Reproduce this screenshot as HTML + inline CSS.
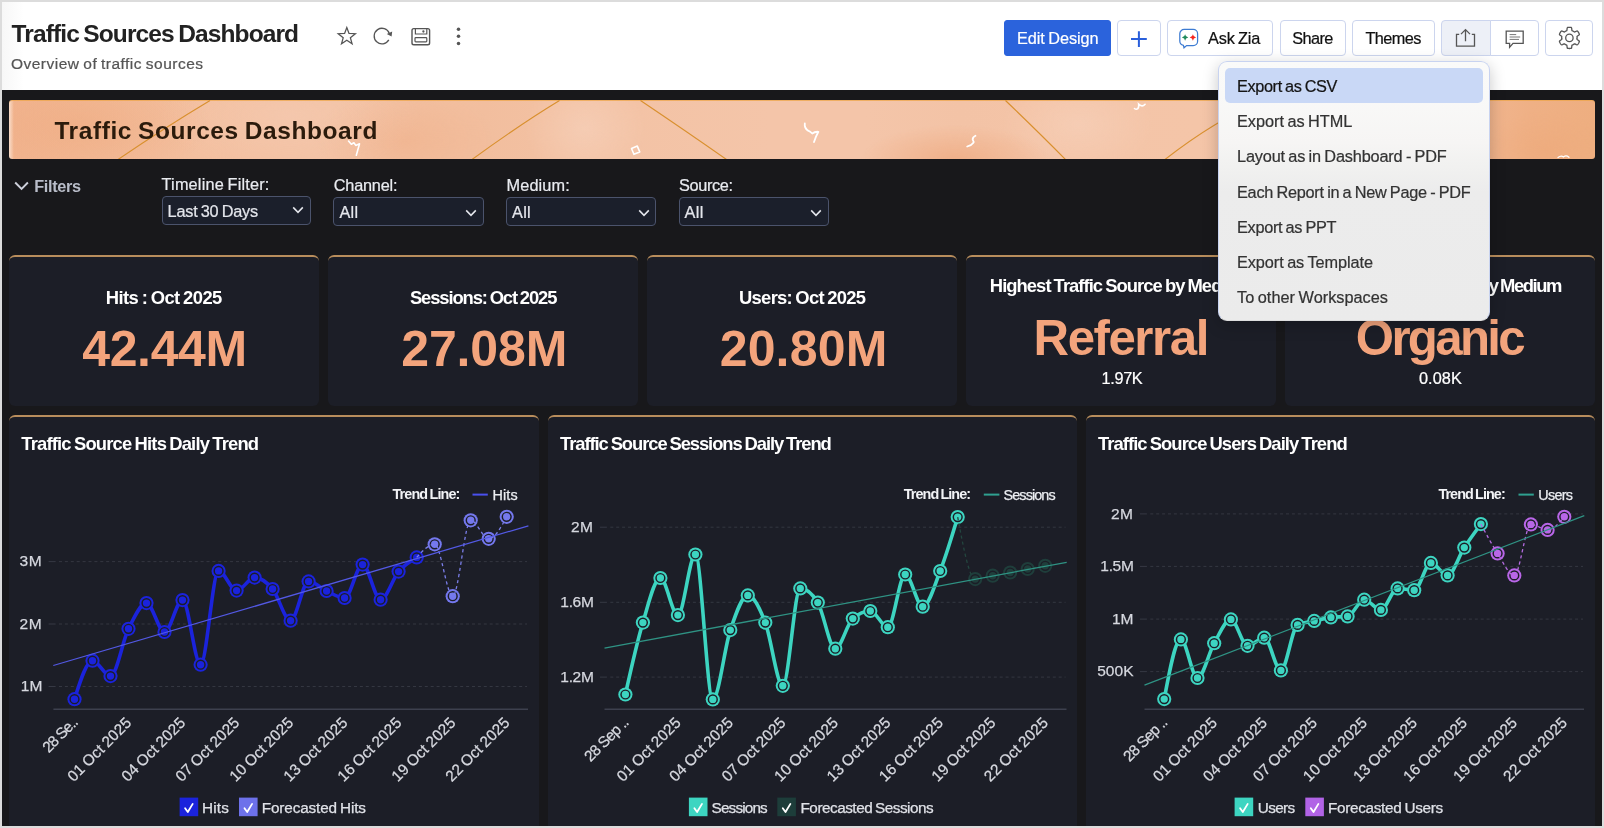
<!DOCTYPE html>
<html lang="en"><head><meta charset="utf-8"><title>Traffic Sources Dashboard</title>
<style>
html,body{margin:0;padding:0}
body{width:1604px;height:828px;overflow:hidden;background:#dcdcdc;font-family:'Liberation Sans',sans-serif;position:relative}
.abs,#stage *{position:absolute}
#stage span,#stage h1,#stage h2,#stage h3,#stage p,#stage li,#stage label{white-space:pre;margin:0;padding:0;font-weight:400;display:block}
#app{position:absolute;left:2px;top:2px;width:1600px;height:824px;overflow:hidden;background:#18181b}
#stage{position:absolute;left:-2px;top:-2px;width:1604px;height:828px;will-change:transform}
#hdr{left:2px;top:2px;width:1600px;height:88px;background:linear-gradient(90deg,#f7f7f7 0,#fff 22px)}
.btn{top:19.8px;height:36px;box-sizing:border-box;border:1px solid #ccd5ee;border-radius:4px;background:#fff}
.btn.primary{background:#2b63dc;border-color:#2b63dc;border-radius:3px}
.btn.on{background:#edf0f7}
#menu{left:1218.3px;top:61.2px;width:272px;height:259.8px;box-sizing:border-box;border-radius:9px;border:1px solid #c8d3f0;border-bottom-color:#dedede;
 background:linear-gradient(180deg,#fafaf9 0px,#f9f9f8 34px,#f6f5f4 80px,#f1f1f0 104px,#ececec 130px,#ebebeb 100%);box-shadow:0 4px 16px rgba(0,0,0,.22);list-style:none;margin:0;padding:0}
#menu .hl{left:5.7px;top:5.5px;width:258.4px;height:35.2px;background:#c9d8f6;border-radius:5px}
#banner{left:9px;top:99.5px;width:1586px;height:59.3px;border-radius:3px;overflow:hidden;box-shadow:inset 0 1px 0 rgba(238,165,75,.75);background:linear-gradient(90deg,rgba(250,225,208,.9) 0px,rgba(250,225,208,0) 5px),radial-gradient(95px 36px at 946px 60.5px,rgba(238,167,124,0.7) 0%,rgba(238,167,124,0) 100%),radial-gradient(90px 55px at 396px 40.5px,rgba(238,167,124,0.38) 0%,rgba(238,167,124,0) 100%),radial-gradient(130px 60px at 71px 25.5px,rgba(238,167,124,0.45) 0%,rgba(238,167,124,0) 100%),radial-gradient(60px 55px at 576px 28.5px,rgba(246,207,184,0.75) 0%,rgba(246,207,184,0) 100%),radial-gradient(75px 50px at 1069px 24.5px,rgba(246,207,184,0.75) 0%,rgba(246,207,184,0) 100%),radial-gradient(130px 60px at 281px 15.5px,rgba(245,203,179,0.6) 0%,rgba(245,203,179,0) 100%),radial-gradient(60px 40px at 1536px 50.5px,rgba(237,168,120,0.5) 0%,rgba(237,168,120,0) 100%),linear-gradient(90deg,#f1b48f 0%,#f2b995 5%,#f3bf9f 12%,#f3c2a4 22%,#f2be9e 30%,#f3c2a4 36%,#f4c5a9 48%,#f4c5a9 54%,#f3c3a6 60%,#f4c4a7 65%,#f4c5a8 75%,#f3c0a1 84%,#f1b690 92%,#efb085 96%,#eeae80 100%)}
.sel{box-sizing:border-box;border:1px solid #4b536c;border-radius:4px;background:#1b1f2b}
.card{background:#1c1e27;border-top:2px solid rgba(219,166,104,.82);border-radius:6px;box-sizing:border-box}
svg{overflow:visible}
svg text{font-family:'Liberation Sans',sans-serif}
</style></head>
<body>
<div id="app"><div id="stage">
<header id="hdr"></header>
<h1 style="left:11.60px;top:21.66px;font-size:24.5px;line-height:24.5px;color:#222;font-weight:700;letter-spacing:-0.890px;word-spacing:-1.47px;">Traffic Sources Dashboard</h1>
<p style="left:11.00px;top:56.48px;font-size:15.5px;line-height:15.5px;color:#555;-webkit-text-stroke:.22px;letter-spacing:0.479px;word-spacing:-0.93px;">Overview of traffic sources</p>
<div class="btn primary" style="left:1003.5px;width:107.5px"><span style="left:12.60px;top:9.60px;font-size:16.3px;line-height:16.3px;color:#fff;letter-spacing:-0.088px;word-spacing:-0.98px;-webkit-text-stroke:.2px #fff;">Edit Design</span></div>
<div class="btn" style="left:1117px;width:43.5px"></div>
<div class="btn" style="left:1167px;width:106.3px"><span style="left:40.00px;top:9.50px;font-size:16.3px;line-height:16.3px;color:#111;-webkit-text-stroke:.22px;letter-spacing:-0.169px;word-spacing:-0.98px;">Ask Zia</span></div>
<div class="btn" style="left:1279.5px;width:66.3px"><span style="left:11.70px;top:9.50px;font-size:16.3px;line-height:16.3px;color:#111;-webkit-text-stroke:.22px;letter-spacing:-0.588px;">Share</span></div>
<div class="btn" style="left:1352.2px;width:82.6px"><span style="left:12.30px;top:9.50px;font-size:16.3px;line-height:16.3px;color:#111;-webkit-text-stroke:.22px;letter-spacing:-0.606px;">Themes</span></div>
<div class="btn on" style="left:1441px;width:49.5px;border-radius:4px 0 0 4px"></div>
<div class="btn" style="left:1489.5px;width:49.7px;border-radius:0 4px 4px 0"></div>
<div class="btn" style="left:1545.3px;width:48.2px"></div>
<svg class="abs" style="left:0;top:0" width="1604" height="90" viewBox="0 0 1604 90" fill="none">
<path d="M346.80,27.50 L349.00,33.47 L355.36,33.72 L350.37,37.66 L352.09,43.78 L346.80,40.25 L341.51,43.78 L343.23,37.66 L338.24,33.72 L344.60,33.47Z" stroke="#555" stroke-width="1.25" stroke-linejoin="miter"/>
<path d="M389.3,33.4 A7.8,7.8 0 1 0 388.8,39.9" stroke="#555" stroke-width="1.3"/>
<path d="M392.2,31.4 L391.6,36.6 L386.8,34.0 Z" fill="#555"/>
<rect x="412" y="28.6" width="17.6" height="16.2" rx="1.8" stroke="#555" stroke-width="1.4"/>
<path d="M415.4,28.8 v5.2 h11.4 v-5.2" stroke="#555" stroke-width="1.2"/>
<circle cx="423.4" cy="31.5" r="1.15" fill="#555"/>
<rect x="415" y="37.6" width="11.8" height="4.2" rx="0.8" stroke="#555" stroke-width="1.2"/>
<circle cx="458.5" cy="29.2" r="1.75" fill="#555"/><circle cx="458.5" cy="36.3" r="1.75" fill="#555"/><circle cx="458.5" cy="43.4" r="1.75" fill="#555"/>
<!-- plus -->
<path d="M1131,39.1 h15.8 M1138.9,31.2 v15.8" stroke="#2a5fdb" stroke-width="2"/>
<!-- zia -->
<path d="M1184.2,29.4 h9 a4.4,4.4 0 0 1 4.4,4.4 v7.4 a4.4,4.4 0 0 1 -4.4,4.4 h-6.6 l-2.6,2.2 l-0.6,-2.4 a4.4,4.4 0 0 1 -3.6,-4.3 v-7.3 a4.4,4.4 0 0 1 4.4,-4.4 Z" stroke="#3d7bd2" stroke-width="1.25" fill="#fff"/>
<path d="M1185.1,34.3 Q1185.4584,37.1416 1188.3,37.5 Q1185.4584,37.8584 1185.1,40.7 Q1184.7415999999998,37.8584 1181.8999999999999,37.5 Q1184.7415999999998,37.1416 1185.1,34.3Z" fill="#1f8a5c"/><path d="M1192.9,34.3 Q1193.2584000000002,37.1416 1196.1000000000001,37.5 Q1193.2584000000002,37.8584 1192.9,40.7 Q1192.5416,37.8584 1189.7,37.5 Q1192.5416,37.1416 1192.9,34.3Z" fill="#f5261f"/>
<!-- export -->
<path d="M1459.2,34.3 h-2.7 v11.9 h18 v-11.9 h-2.7" stroke="#555" stroke-width="1.3"/>
<path d="M1465.5,41.2 v-11.4 M1461,34.1 l4.5,-4.5 l4.5,4.5" stroke="#555" stroke-width="1.3"/>
<!-- comment -->
<path d="M1506.2,31.1 h17 v12.2 h-10.2 l-3.4,4 v-4 h-3.4 Z" stroke="#555" stroke-width="1.3"/>
<path d="M1509.6,34.6 h6.6 M1509.6,37 h10.6 M1509.6,39.4 h9.4" stroke="#777" stroke-width="1"/>
<!-- gear -->
<path d="M1569.40,27.30 L1569.77,27.31 L1570.14,27.33 L1570.51,27.36 L1570.88,27.40 L1571.24,27.47 L1571.54,27.82 L1571.72,28.59 L1571.80,29.53 L1571.87,30.30 L1572.04,30.66 L1572.28,30.76 L1572.53,30.87 L1572.78,30.98 L1573.01,31.10 L1573.25,31.23 L1573.48,31.37 L1573.71,31.52 L1573.93,31.67 L1574.14,31.83 L1574.35,32.00 L1574.75,31.96 L1575.45,31.64 L1576.30,31.23 L1577.06,31.00 L1577.52,31.09 L1577.75,31.37 L1577.98,31.67 L1578.19,31.97 L1578.39,32.28 L1578.58,32.60 L1578.76,32.92 L1578.93,33.25 L1579.08,33.59 L1579.23,33.93 L1579.36,34.28 L1579.20,34.72 L1578.62,35.26 L1577.85,35.79 L1577.22,36.24 L1576.99,36.56 L1577.03,36.83 L1577.06,37.10 L1577.08,37.36 L1577.10,37.63 L1577.10,37.90 L1577.10,38.17 L1577.08,38.44 L1577.06,38.70 L1577.03,38.97 L1576.99,39.24 L1577.22,39.56 L1577.85,40.01 L1578.62,40.54 L1579.20,41.08 L1579.36,41.52 L1579.23,41.87 L1579.08,42.21 L1578.93,42.55 L1578.76,42.88 L1578.58,43.20 L1578.39,43.52 L1578.19,43.83 L1577.98,44.13 L1577.75,44.43 L1577.52,44.71 L1577.06,44.80 L1576.30,44.57 L1575.45,44.16 L1574.75,43.84 L1574.35,43.80 L1574.14,43.97 L1573.93,44.13 L1573.71,44.28 L1573.48,44.43 L1573.25,44.57 L1573.01,44.70 L1572.78,44.82 L1572.53,44.93 L1572.28,45.04 L1572.04,45.14 L1571.87,45.50 L1571.80,46.27 L1571.72,47.21 L1571.54,47.98 L1571.24,48.33 L1570.88,48.40 L1570.51,48.44 L1570.14,48.47 L1569.77,48.49 L1569.40,48.50 L1569.03,48.49 L1568.66,48.47 L1568.29,48.44 L1567.92,48.40 L1567.56,48.33 L1567.26,47.98 L1567.08,47.21 L1567.00,46.27 L1566.93,45.50 L1566.76,45.14 L1566.52,45.04 L1566.27,44.93 L1566.02,44.82 L1565.79,44.70 L1565.55,44.57 L1565.32,44.43 L1565.09,44.28 L1564.87,44.13 L1564.66,43.97 L1564.45,43.80 L1564.05,43.84 L1563.35,44.16 L1562.50,44.57 L1561.74,44.80 L1561.28,44.71 L1561.05,44.43 L1560.82,44.13 L1560.61,43.83 L1560.41,43.52 L1560.22,43.20 L1560.04,42.88 L1559.87,42.55 L1559.72,42.21 L1559.57,41.87 L1559.44,41.52 L1559.60,41.08 L1560.18,40.54 L1560.95,40.01 L1561.58,39.56 L1561.81,39.24 L1561.77,38.97 L1561.74,38.70 L1561.72,38.44 L1561.70,38.17 L1561.70,37.90 L1561.70,37.63 L1561.72,37.36 L1561.74,37.10 L1561.77,36.83 L1561.81,36.56 L1561.58,36.24 L1560.95,35.79 L1560.18,35.26 L1559.60,34.72 L1559.44,34.28 L1559.57,33.93 L1559.72,33.59 L1559.87,33.25 L1560.04,32.92 L1560.22,32.60 L1560.41,32.28 L1560.61,31.97 L1560.82,31.67 L1561.05,31.37 L1561.28,31.09 L1561.74,31.00 L1562.50,31.23 L1563.35,31.64 L1564.05,31.96 L1564.45,32.00 L1564.66,31.83 L1564.87,31.67 L1565.09,31.52 L1565.32,31.37 L1565.55,31.23 L1565.79,31.10 L1566.02,30.98 L1566.27,30.87 L1566.52,30.76 L1566.76,30.66 L1566.93,30.30 L1567.00,29.53 L1567.08,28.59 L1567.26,27.82 L1567.56,27.47 L1567.92,27.40 L1568.29,27.36 L1568.66,27.33 L1569.03,27.31Z" stroke="#555" stroke-width="1.3" stroke-linejoin="round"/>
<circle cx="1569.4" cy="37.9" r="3.7" stroke="#555" stroke-width="1.3"/>
</svg>
<section id="banner"><svg class="abs" style="left:0;top:0" width="1586" height="59.3" viewBox="0 0 1586 59.3" fill="none">
<defs>
<radialGradient id="rg1" cx="0.5" cy="0.5" r="0.5"><stop offset="0" stop-color="#f8d8c4" stop-opacity=".95"/><stop offset="1" stop-color="#f8d8c4" stop-opacity="0"/></radialGradient>
<radialGradient id="rg2" cx="0.5" cy="0.5" r="0.5"><stop offset="0" stop-color="#efae85" stop-opacity=".95"/><stop offset="1" stop-color="#efae85" stop-opacity="0"/></radialGradient>
</defs>
<path d="M109,59.5 Q156,27.5 201,0.5" stroke="#d9902f" stroke-width="1.15"/>
<path d="M463,59.5 Q511,24.5 550.5,0.5" stroke="#d9902f" stroke-width="1.15"/>
<path d="M631.5,0.5 Q679,32.5 717.5,59.5" stroke="#d9902f" stroke-width="1.15"/>
<path d="M996.5,0.5 Q1031,33.5 1056.5,59.5" stroke="#d9902f" stroke-width="1.15"/>
<path d="M1156,59.5 Q1206,20.5 1253,0.5" stroke="#d9902f" stroke-width="1.15"/>
<path d="M339.5,41.0 l2.8,3.2 l2.6,-1.4 l1.8,2.6 l3.8,-1.6 l-3.2,11.4" stroke="#fff" stroke-width="1.6" stroke-linecap="round" stroke-linejoin="round"/>
<path d="M795.8,23.5 q-0.6,4.6 3.3,7.2 q2.2,0.8 4.1,2.8 q2.6,-2 6.2,-1.7 q-2.6,4.6 -4.4,10.3" stroke="#fff" stroke-width="1.8" stroke-linecap="round" stroke-linejoin="round"/>
<path d="M966.5,35.80000000000001 q-3,1.4 -2.8,3.9 q1.4,2 0.7,3 q-1.6,2.4 -6.2,3.8" stroke="#fff" stroke-width="1.8" stroke-linecap="round"/>
<path d="M1125.5,8.5 q1.6,1.4 3.4,0.2 q1.2,-2.4 0.8,-4.6 q2.2,1.8 3.4,1.8 q1.6,0 3,-1.6" stroke="#fff" stroke-width="1.6" stroke-linecap="round"/>
<path d="M622.5,48.5 l5.8,-2.4 l2.4,5.8 l-5.8,2.4 Z" stroke="#fff" stroke-width="1.6" stroke-linejoin="round"/>
<path d="M1549,57.5 q3,-2.4 5.6,-0.6 q2.6,-2 5.4,0.4" stroke="#fff" stroke-width="1.2" stroke-linecap="round"/>
</svg><h2 style="left:45.40px;top:19.16px;font-size:24.5px;line-height:24.5px;color:#2b1b0c;font-weight:700;letter-spacing:0.589px;word-spacing:-1.47px;">Traffic Sources Dashboard</h2></section>
<svg class="abs" style="left:0;top:170px" width="40" height="30" viewBox="0 170 40 30" fill="none"><path d="M15.2,182.5 l6.35,6.4 l6.35,-6.4" stroke="#cdd0db" stroke-width="1.9"/></svg>
<span style="left:34.20px;top:178.40px;font-size:16.3px;line-height:16.3px;color:#b9bdc9;font-weight:700;letter-spacing:-0.329px;">Filters</span>
<label style="left:161.60px;top:175.90px;font-size:16.3px;line-height:16.3px;color:#e9ebf0;-webkit-text-stroke:.22px;letter-spacing:0.169px;word-spacing:-0.98px;">Timeline Filter:</label><div class="sel" style="left:161.6px;top:196.2px;width:149.2px;height:28.6px"><span style="left:5.00px;top:6.20px;font-size:16.3px;line-height:16.3px;color:#e4e6ec;-webkit-text-stroke:.22px;letter-spacing:-0.234px;word-spacing:-0.98px;">Last 30 Days</span><svg style="left:129.4px;top:8.8px" width="12" height="8" viewBox="0 0 12 8" fill="none"><path d="M1.2,1.4 l4.8,5 l4.8,-5" stroke="#e4e6ec" stroke-width="1.55"/></svg></div>
<label style="left:333.70px;top:176.90px;font-size:16.3px;line-height:16.3px;color:#e9ebf0;-webkit-text-stroke:.22px;letter-spacing:-0.184px;">Channel:</label><div class="sel" style="left:333.4px;top:197px;width:150.6px;height:29.0px"><span style="left:5.00px;top:6.30px;font-size:16.3px;line-height:16.3px;color:#e4e6ec;-webkit-text-stroke:.22px;letter-spacing:0.295px;">All</span><svg style="left:130.6px;top:11.3px" width="12" height="8" viewBox="0 0 12 8" fill="none"><path d="M1.2,1.4 l4.8,5 l4.8,-5" stroke="#e4e6ec" stroke-width="1.55"/></svg></div>
<label style="left:506.50px;top:176.90px;font-size:16.3px;line-height:16.3px;color:#e9ebf0;-webkit-text-stroke:.22px;letter-spacing:0.144px;">Medium:</label><div class="sel" style="left:506px;top:197px;width:150.3px;height:29.0px"><span style="left:5.00px;top:6.30px;font-size:16.3px;line-height:16.3px;color:#e4e6ec;-webkit-text-stroke:.22px;letter-spacing:0.295px;">All</span><svg style="left:130.5px;top:11.3px" width="12" height="8" viewBox="0 0 12 8" fill="none"><path d="M1.2,1.4 l4.8,5 l4.8,-5" stroke="#e4e6ec" stroke-width="1.55"/></svg></div>
<label style="left:679.00px;top:176.90px;font-size:16.3px;line-height:16.3px;color:#e9ebf0;-webkit-text-stroke:.22px;letter-spacing:-0.354px;">Source:</label><div class="sel" style="left:678.6px;top:197px;width:150.4px;height:29.0px"><span style="left:5.00px;top:6.30px;font-size:16.3px;line-height:16.3px;color:#e4e6ec;-webkit-text-stroke:.22px;letter-spacing:0.295px;">All</span><svg style="left:130.4px;top:11.3px" width="12" height="8" viewBox="0 0 12 8" fill="none"><path d="M1.2,1.4 l4.8,5 l4.8,-5" stroke="#e4e6ec" stroke-width="1.55"/></svg></div>
<section class="card" style="left:9px;top:255.2px;width:310px;height:150.5px"><h3 style="left:96.70px;top:31.52px;font-size:18.4px;line-height:18.4px;color:#fff;font-weight:700;letter-spacing:-0.562px;word-spacing:-1.1px;">Hits : Oct 2025</h3><span style="left:73.20px;top:66.47px;font-size:50px;line-height:50px;color:#f3a47c;font-weight:700;letter-spacing:-0.356px;">42.44M</span></section>
<section class="card" style="left:328px;top:255.2px;width:310px;height:150.5px"><h3 style="left:81.95px;top:31.52px;font-size:18.4px;line-height:18.4px;color:#fff;font-weight:700;letter-spacing:-1.116px;word-spacing:-1.1px;">Sessions: Oct 2025</h3><span style="left:73.20px;top:66.47px;font-size:50px;line-height:50px;color:#f3a47c;font-weight:700;letter-spacing:-0.116px;">27.08M</span></section>
<section class="card" style="left:647px;top:255.2px;width:310px;height:150.5px"><h3 style="left:92.00px;top:31.52px;font-size:18.4px;line-height:18.4px;color:#fff;font-weight:700;letter-spacing:-0.703px;word-spacing:-1.1px;">Users: Oct 2025</h3><span style="left:72.65px;top:66.47px;font-size:50px;line-height:50px;color:#f3a47c;font-weight:700;letter-spacing:0.184px;">20.80M</span></section>
<section class="card" style="left:966px;top:255.2px;width:310px;height:150.5px"><h3 style="left:23.80px;top:19.72px;font-size:18.4px;line-height:18.4px;color:#fff;font-weight:700;letter-spacing:-0.953px;word-spacing:-1.1px;">Highest Traffic Source by Medium</h3><span style="left:67.60px;top:55.34px;font-size:49.2px;line-height:49.2px;color:#f3a47c;font-weight:700;letter-spacing:-1.460px;">Referral</span><span style="left:135.60px;top:113.10px;font-size:16.3px;line-height:16.3px;color:#fff;-webkit-text-stroke:.22px;letter-spacing:-0.366px;">1.97K</span></section>
<section class="card" style="left:1285px;top:255.2px;width:310px;height:150.5px"><h3 style="left:32.60px;top:19.72px;font-size:18.4px;line-height:18.4px;color:#fff;font-weight:700;letter-spacing:-1.436px;word-spacing:-1.1px;">Lowest Traffic Source by Medium</h3><span style="left:70.80px;top:55.34px;font-size:49.2px;line-height:49.2px;color:#f3a47c;font-weight:700;letter-spacing:-2.679px;">Organic</span><span style="left:134.00px;top:113.10px;font-size:16.3px;line-height:16.3px;color:#fff;-webkit-text-stroke:.22px;letter-spacing:0.059px;">0.08K</span></section>
<section class="card" style="left:9px;top:415px;width:530px;height:430px"><h3 style="left:12.30px;top:17.82px;font-size:18.4px;line-height:18.4px;color:#fff;font-weight:700;letter-spacing:-0.819px;word-spacing:-1.1px;">Traffic Source Hits Daily Trend</h3></section>
<section class="card" style="left:548px;top:415px;width:529px;height:430px"><h3 style="left:12.10px;top:17.82px;font-size:18.4px;line-height:18.4px;color:#fff;font-weight:700;letter-spacing:-1.078px;word-spacing:-1.1px;">Traffic Source Sessions Daily Trend</h3></section>
<section class="card" style="left:1086px;top:415px;width:509px;height:430px"><h3 style="left:12.00px;top:17.82px;font-size:18.4px;line-height:18.4px;color:#fff;font-weight:700;letter-spacing:-0.937px;word-spacing:-1.1px;">Traffic Source Users Daily Trend</h3></section>
<svg class="abs" style="left:0;top:0" width="1604" height="828" viewBox="0 0 1604 828">
<g>
<line x1="48.6" y1="561.6" x2="55.6" y2="561.6" stroke="#363944" stroke-width="1"/>
<line x1="59.0" y1="561.6" x2="527.0" y2="561.6" stroke="#343741" stroke-width="1" stroke-dasharray="3 2.9"/>
<text x="42.30" y="566.30" font-size="15.5" fill="#d6d8df" stroke="#d6d8df" stroke-width=".25" text-anchor="end" letter-spacing="0.653">3M</text>
<line x1="48.6" y1="624.0" x2="55.6" y2="624.0" stroke="#363944" stroke-width="1"/>
<line x1="59.0" y1="624.0" x2="527.0" y2="624.0" stroke="#343741" stroke-width="1" stroke-dasharray="3 2.9"/>
<text x="42.30" y="628.70" font-size="15.5" fill="#d6d8df" stroke="#d6d8df" stroke-width=".25" text-anchor="end" letter-spacing="0.653">2M</text>
<line x1="48.6" y1="686.5" x2="55.6" y2="686.5" stroke="#363944" stroke-width="1"/>
<line x1="59.0" y1="686.5" x2="527.0" y2="686.5" stroke="#343741" stroke-width="1" stroke-dasharray="3 2.9"/>
<text x="42.30" y="691.20" font-size="15.5" fill="#d6d8df" stroke="#d6d8df" stroke-width=".25" text-anchor="end" letter-spacing="-0.047">1M</text>
<line x1="53.4" y1="709.3" x2="528.0" y2="709.3" stroke="#3d404e" stroke-width="1.4"/>
<path d="M74.5,699.2C80.5,680.0 86.5,660.7 92.5,660.7C98.5,660.7 104.5,676.1 110.5,676.1C116.5,676.1 122.5,641.0 128.5,628.8C134.5,616.6 140.5,603.1 146.5,603.1C152.5,603.1 158.5,632.0 164.5,632.0C170.5,632.0 176.5,600.1 182.5,600.1C188.6,600.1 194.6,664.7 200.6,664.7C206.6,664.7 212.6,570.9 218.6,570.9C224.6,570.9 230.6,590.6 236.6,590.6C242.6,590.6 248.6,577.6 254.6,577.6C260.6,577.6 266.6,581.8 272.6,589.0C278.6,596.2 284.6,620.7 290.6,620.7C296.6,620.7 302.6,581.4 308.6,581.4C314.6,581.4 320.6,588.2 326.6,591.0C332.6,593.8 338.6,598.0 344.6,598.0C350.6,598.0 356.6,564.6 362.6,564.6C368.6,564.6 374.6,599.7 380.6,599.7C386.6,599.7 392.6,578.7 398.6,571.6C404.6,564.6 410.6,561.0 416.7,557.4" fill="none" stroke="#1b23dc" stroke-width="3.6" stroke-linejoin="round" stroke-linecap="round"/>
<circle cx="74.5" cy="699.2" r="7.1" fill="#1b23dc"/><circle cx="74.5" cy="699.2" r="4.4" fill="none" stroke="#1c1e27" stroke-width="1.45"/>
<circle cx="92.5" cy="660.7" r="7.1" fill="#1b23dc"/><circle cx="92.5" cy="660.7" r="4.4" fill="none" stroke="#1c1e27" stroke-width="1.45"/>
<circle cx="110.5" cy="676.1" r="7.1" fill="#1b23dc"/><circle cx="110.5" cy="676.1" r="4.4" fill="none" stroke="#1c1e27" stroke-width="1.45"/>
<circle cx="128.5" cy="628.8" r="7.1" fill="#1b23dc"/><circle cx="128.5" cy="628.8" r="4.4" fill="none" stroke="#1c1e27" stroke-width="1.45"/>
<circle cx="146.5" cy="603.1" r="7.1" fill="#1b23dc"/><circle cx="146.5" cy="603.1" r="4.4" fill="none" stroke="#1c1e27" stroke-width="1.45"/>
<circle cx="164.5" cy="632.0" r="7.1" fill="#1b23dc"/><circle cx="164.5" cy="632.0" r="4.4" fill="none" stroke="#1c1e27" stroke-width="1.45"/>
<circle cx="182.5" cy="600.1" r="7.1" fill="#1b23dc"/><circle cx="182.5" cy="600.1" r="4.4" fill="none" stroke="#1c1e27" stroke-width="1.45"/>
<circle cx="200.6" cy="664.7" r="7.1" fill="#1b23dc"/><circle cx="200.6" cy="664.7" r="4.4" fill="none" stroke="#1c1e27" stroke-width="1.45"/>
<circle cx="218.6" cy="570.9" r="7.1" fill="#1b23dc"/><circle cx="218.6" cy="570.9" r="4.4" fill="none" stroke="#1c1e27" stroke-width="1.45"/>
<circle cx="236.6" cy="590.6" r="7.1" fill="#1b23dc"/><circle cx="236.6" cy="590.6" r="4.4" fill="none" stroke="#1c1e27" stroke-width="1.45"/>
<circle cx="254.6" cy="577.6" r="7.1" fill="#1b23dc"/><circle cx="254.6" cy="577.6" r="4.4" fill="none" stroke="#1c1e27" stroke-width="1.45"/>
<circle cx="272.6" cy="589.0" r="7.1" fill="#1b23dc"/><circle cx="272.6" cy="589.0" r="4.4" fill="none" stroke="#1c1e27" stroke-width="1.45"/>
<circle cx="290.6" cy="620.7" r="7.1" fill="#1b23dc"/><circle cx="290.6" cy="620.7" r="4.4" fill="none" stroke="#1c1e27" stroke-width="1.45"/>
<circle cx="308.6" cy="581.4" r="7.1" fill="#1b23dc"/><circle cx="308.6" cy="581.4" r="4.4" fill="none" stroke="#1c1e27" stroke-width="1.45"/>
<circle cx="326.6" cy="591.0" r="7.1" fill="#1b23dc"/><circle cx="326.6" cy="591.0" r="4.4" fill="none" stroke="#1c1e27" stroke-width="1.45"/>
<circle cx="344.6" cy="598.0" r="7.1" fill="#1b23dc"/><circle cx="344.6" cy="598.0" r="4.4" fill="none" stroke="#1c1e27" stroke-width="1.45"/>
<circle cx="362.6" cy="564.6" r="7.1" fill="#1b23dc"/><circle cx="362.6" cy="564.6" r="4.4" fill="none" stroke="#1c1e27" stroke-width="1.45"/>
<circle cx="380.6" cy="599.7" r="7.1" fill="#1b23dc"/><circle cx="380.6" cy="599.7" r="4.4" fill="none" stroke="#1c1e27" stroke-width="1.45"/>
<circle cx="398.6" cy="571.6" r="7.1" fill="#1b23dc"/><circle cx="398.6" cy="571.6" r="4.4" fill="none" stroke="#1c1e27" stroke-width="1.45"/>
<circle cx="416.7" cy="557.4" r="7.1" fill="#1b23dc"/><circle cx="416.7" cy="557.4" r="4.4" fill="none" stroke="#1c1e27" stroke-width="1.45"/>
<circle cx="434.7" cy="544.3" r="7.1" fill="#7478ee"/><circle cx="434.7" cy="544.3" r="4.4" fill="none" stroke="#1c1e27" stroke-width="1.45"/>
<circle cx="452.7" cy="596.2" r="7.1" fill="#7478ee"/><circle cx="452.7" cy="596.2" r="4.4" fill="none" stroke="#1c1e27" stroke-width="1.45"/>
<circle cx="470.7" cy="520.3" r="7.1" fill="#7478ee"/><circle cx="470.7" cy="520.3" r="4.4" fill="none" stroke="#1c1e27" stroke-width="1.45"/>
<circle cx="488.7" cy="538.8" r="7.1" fill="#7478ee"/><circle cx="488.7" cy="538.8" r="4.4" fill="none" stroke="#1c1e27" stroke-width="1.45"/>
<circle cx="506.7" cy="516.8" r="7.1" fill="#7478ee"/><circle cx="506.7" cy="516.8" r="4.4" fill="none" stroke="#1c1e27" stroke-width="1.45"/>
<path d="M416.7,557.4C422.7,550.8 428.7,544.3 434.7,544.3C440.7,544.3 446.7,596.2 452.7,596.2C458.7,596.2 464.7,520.3 470.7,520.3C476.7,520.3 482.7,538.8 488.7,538.8C494.7,538.8 500.7,527.8 506.7,516.8" fill="none" stroke="#7a7ee8" stroke-width="1.3" stroke-dasharray="3.2 3"/>
<line x1="53.3" y1="665.5" x2="528.4" y2="525.8" stroke="#5359e4" stroke-width="1.25"/>
<text x="78.40" y="723.70" font-size="15.4" fill="#d6d8df" stroke="#d6d8df" stroke-width=".25" text-anchor="end" letter-spacing="-0.964" transform="rotate(-45 78.40 723.70)">28 Se..</text>
<text x="132.42" y="723.70" font-size="15.4" fill="#d6d8df" stroke="#d6d8df" stroke-width=".25" text-anchor="end" letter-spacing="0.098" word-spacing="-0.92" transform="rotate(-45 132.42 723.70)">01 Oct 2025</text>
<text x="186.45" y="723.70" font-size="15.4" fill="#d6d8df" stroke="#d6d8df" stroke-width=".25" text-anchor="end" letter-spacing="0.098" word-spacing="-0.92" transform="rotate(-45 186.45 723.70)">04 Oct 2025</text>
<text x="240.47" y="723.70" font-size="15.4" fill="#d6d8df" stroke="#d6d8df" stroke-width=".25" text-anchor="end" letter-spacing="0.098" word-spacing="-0.92" transform="rotate(-45 240.47 723.70)">07 Oct 2025</text>
<text x="294.50" y="723.70" font-size="15.4" fill="#d6d8df" stroke="#d6d8df" stroke-width=".25" text-anchor="end" letter-spacing="0.098" word-spacing="-0.92" transform="rotate(-45 294.50 723.70)">10 Oct 2025</text>
<text x="348.52" y="723.70" font-size="15.4" fill="#d6d8df" stroke="#d6d8df" stroke-width=".25" text-anchor="end" letter-spacing="0.098" word-spacing="-0.92" transform="rotate(-45 348.52 723.70)">13 Oct 2025</text>
<text x="402.54" y="723.70" font-size="15.4" fill="#d6d8df" stroke="#d6d8df" stroke-width=".25" text-anchor="end" letter-spacing="0.098" word-spacing="-0.92" transform="rotate(-45 402.54 723.70)">16 Oct 2025</text>
<text x="456.57" y="723.70" font-size="15.4" fill="#d6d8df" stroke="#d6d8df" stroke-width=".25" text-anchor="end" letter-spacing="0.098" word-spacing="-0.92" transform="rotate(-45 456.57 723.70)">19 Oct 2025</text>
<text x="510.59" y="723.70" font-size="15.4" fill="#d6d8df" stroke="#d6d8df" stroke-width=".25" text-anchor="end" letter-spacing="0.098" word-spacing="-0.92" transform="rotate(-45 510.59 723.70)">22 Oct 2025</text>
<text x="392.50" y="499.40" font-size="14.4" fill="#f2f3f6" font-weight="700" letter-spacing="-0.890" word-spacing="-0.86">Trend Line:</text>
<line x1="472.5" y1="494.6" x2="487.8" y2="494.6" stroke="#4a50ee" stroke-width="2"/>
<text x="492.50" y="499.70" font-size="14.4" fill="#eceef2" stroke="#eceef2" stroke-width=".25" letter-spacing="0.134">Hits</text>
<rect x="179.6" y="797.6" width="18.6" height="18.6" fill="#1b23dc"/><path d="M185.1,808.3 l2.7,3.7 l4.9,-8.1" fill="none" stroke="#fff" stroke-width="1.8" stroke-linecap="round" stroke-linejoin="round"/>
<text x="202.00" y="812.70" font-size="15.3" fill="#dfe1e7" stroke="#dfe1e7" stroke-width=".25" letter-spacing="0.214">Hits</text>
<rect x="239.0" y="797.6" width="18.6" height="18.6" fill="#6d71ea"/><path d="M244.5,808.3 l2.7,3.7 l4.9,-8.1" fill="none" stroke="#fff" stroke-width="1.8" stroke-linecap="round" stroke-linejoin="round"/>
<text x="261.80" y="812.70" font-size="15.3" fill="#dfe1e7" stroke="#dfe1e7" stroke-width=".25" letter-spacing="-0.143" word-spacing="-0.92">Forecasted Hits</text>
</g>
<g>
<line x1="599.9" y1="527.2" x2="606.9" y2="527.2" stroke="#363944" stroke-width="1"/>
<line x1="610.3" y1="527.2" x2="1065.5" y2="527.2" stroke="#343741" stroke-width="1" stroke-dasharray="3 2.9"/>
<text x="593.50" y="531.90" font-size="15.5" fill="#d6d8df" stroke="#d6d8df" stroke-width=".25" text-anchor="end" letter-spacing="0.453">2M</text>
<line x1="599.9" y1="602.3" x2="606.9" y2="602.3" stroke="#363944" stroke-width="1"/>
<line x1="610.3" y1="602.3" x2="1065.5" y2="602.3" stroke="#343741" stroke-width="1" stroke-dasharray="3 2.9"/>
<text x="593.50" y="607.00" font-size="15.5" fill="#d6d8df" stroke="#d6d8df" stroke-width=".25" text-anchor="end" letter-spacing="-0.323">1.6M</text>
<line x1="599.9" y1="677.1" x2="606.9" y2="677.1" stroke="#363944" stroke-width="1"/>
<line x1="610.3" y1="677.1" x2="1065.5" y2="677.1" stroke="#343741" stroke-width="1" stroke-dasharray="3 2.9"/>
<text x="593.50" y="681.80" font-size="15.5" fill="#d6d8df" stroke="#d6d8df" stroke-width=".25" text-anchor="end" letter-spacing="-0.323">1.2M</text>
<line x1="604.5" y1="709.3" x2="1066.5" y2="709.3" stroke="#3d404e" stroke-width="1.4"/>
<path d="M625.4,694.5C631.2,668.3 637.1,642.0 642.9,622.6C648.7,603.2 654.5,578.0 660.4,578.0C666.2,578.0 672.0,615.1 677.9,615.1C683.7,615.1 689.5,554.5 695.4,554.5C701.2,554.5 707.0,699.4 712.8,699.4C718.7,699.4 724.5,647.4 730.3,630.1C736.2,612.8 742.0,595.4 747.8,595.4C753.7,595.4 759.5,607.5 765.3,622.6C771.1,637.7 777.0,685.8 782.8,685.8C788.6,685.8 794.5,588.4 800.3,588.4C806.1,588.4 812.0,593.1 817.8,602.6C823.6,612.1 829.4,648.7 835.3,648.7C841.1,648.7 846.9,623.7 852.8,618.6C858.6,613.5 864.4,611.0 870.3,611.0C876.1,611.0 881.9,627.2 887.8,627.2C893.6,627.2 899.4,574.5 905.2,574.5C911.1,574.5 916.9,606.7 922.7,606.7C928.6,606.7 934.4,585.9 940.2,571.0C946.0,556.1 951.9,536.6 957.7,517.1" fill="none" stroke="#3dd5c1" stroke-width="3.6" stroke-linejoin="round" stroke-linecap="round"/>
<circle cx="625.4" cy="694.5" r="7.1" fill="#3dd5c1"/><circle cx="625.4" cy="694.5" r="4.4" fill="none" stroke="#1c1e27" stroke-width="1.45"/>
<circle cx="642.9" cy="622.6" r="7.1" fill="#3dd5c1"/><circle cx="642.9" cy="622.6" r="4.4" fill="none" stroke="#1c1e27" stroke-width="1.45"/>
<circle cx="660.4" cy="578.0" r="7.1" fill="#3dd5c1"/><circle cx="660.4" cy="578.0" r="4.4" fill="none" stroke="#1c1e27" stroke-width="1.45"/>
<circle cx="677.9" cy="615.1" r="7.1" fill="#3dd5c1"/><circle cx="677.9" cy="615.1" r="4.4" fill="none" stroke="#1c1e27" stroke-width="1.45"/>
<circle cx="695.4" cy="554.5" r="7.1" fill="#3dd5c1"/><circle cx="695.4" cy="554.5" r="4.4" fill="none" stroke="#1c1e27" stroke-width="1.45"/>
<circle cx="712.8" cy="699.4" r="7.1" fill="#3dd5c1"/><circle cx="712.8" cy="699.4" r="4.4" fill="none" stroke="#1c1e27" stroke-width="1.45"/>
<circle cx="730.3" cy="630.1" r="7.1" fill="#3dd5c1"/><circle cx="730.3" cy="630.1" r="4.4" fill="none" stroke="#1c1e27" stroke-width="1.45"/>
<circle cx="747.8" cy="595.4" r="7.1" fill="#3dd5c1"/><circle cx="747.8" cy="595.4" r="4.4" fill="none" stroke="#1c1e27" stroke-width="1.45"/>
<circle cx="765.3" cy="622.6" r="7.1" fill="#3dd5c1"/><circle cx="765.3" cy="622.6" r="4.4" fill="none" stroke="#1c1e27" stroke-width="1.45"/>
<circle cx="782.8" cy="685.8" r="7.1" fill="#3dd5c1"/><circle cx="782.8" cy="685.8" r="4.4" fill="none" stroke="#1c1e27" stroke-width="1.45"/>
<circle cx="800.3" cy="588.4" r="7.1" fill="#3dd5c1"/><circle cx="800.3" cy="588.4" r="4.4" fill="none" stroke="#1c1e27" stroke-width="1.45"/>
<circle cx="817.8" cy="602.6" r="7.1" fill="#3dd5c1"/><circle cx="817.8" cy="602.6" r="4.4" fill="none" stroke="#1c1e27" stroke-width="1.45"/>
<circle cx="835.3" cy="648.7" r="7.1" fill="#3dd5c1"/><circle cx="835.3" cy="648.7" r="4.4" fill="none" stroke="#1c1e27" stroke-width="1.45"/>
<circle cx="852.8" cy="618.6" r="7.1" fill="#3dd5c1"/><circle cx="852.8" cy="618.6" r="4.4" fill="none" stroke="#1c1e27" stroke-width="1.45"/>
<circle cx="870.3" cy="611.0" r="7.1" fill="#3dd5c1"/><circle cx="870.3" cy="611.0" r="4.4" fill="none" stroke="#1c1e27" stroke-width="1.45"/>
<circle cx="887.8" cy="627.2" r="7.1" fill="#3dd5c1"/><circle cx="887.8" cy="627.2" r="4.4" fill="none" stroke="#1c1e27" stroke-width="1.45"/>
<circle cx="905.2" cy="574.5" r="7.1" fill="#3dd5c1"/><circle cx="905.2" cy="574.5" r="4.4" fill="none" stroke="#1c1e27" stroke-width="1.45"/>
<circle cx="922.7" cy="606.7" r="7.1" fill="#3dd5c1"/><circle cx="922.7" cy="606.7" r="4.4" fill="none" stroke="#1c1e27" stroke-width="1.45"/>
<circle cx="940.2" cy="571.0" r="7.1" fill="#3dd5c1"/><circle cx="940.2" cy="571.0" r="4.4" fill="none" stroke="#1c1e27" stroke-width="1.45"/>
<circle cx="957.7" cy="517.1" r="7.1" fill="#3dd5c1"/><circle cx="957.7" cy="517.1" r="4.4" fill="none" stroke="#1c1e27" stroke-width="1.45"/>
<circle cx="975.2" cy="579.1" r="7.1" fill="#1f3e3b"/><circle cx="975.2" cy="579.1" r="4.4" fill="none" stroke="#1c1e27" stroke-width="1.45"/>
<circle cx="992.7" cy="575.7" r="7.1" fill="#1f3e3b"/><circle cx="992.7" cy="575.7" r="4.4" fill="none" stroke="#1c1e27" stroke-width="1.45"/>
<circle cx="1010.2" cy="572.5" r="7.1" fill="#1f3e3b"/><circle cx="1010.2" cy="572.5" r="4.4" fill="none" stroke="#1c1e27" stroke-width="1.45"/>
<circle cx="1027.7" cy="569.0" r="7.1" fill="#1f3e3b"/><circle cx="1027.7" cy="569.0" r="4.4" fill="none" stroke="#1c1e27" stroke-width="1.45"/>
<circle cx="1045.2" cy="565.8" r="7.1" fill="#1f3e3b"/><circle cx="1045.2" cy="565.8" r="4.4" fill="none" stroke="#1c1e27" stroke-width="1.45"/>
<path d="M957.7,517.1C963.5,548.1 969.4,579.1 975.2,579.1C981.0,579.1 986.9,576.8 992.7,575.7C998.5,574.6 1004.3,573.6 1010.2,572.5C1016.0,571.4 1021.8,570.1 1027.7,569.0C1033.5,567.9 1039.3,566.8 1045.2,565.8" fill="none" stroke="#23463f" stroke-width="1.3" stroke-dasharray="3.2 3"/>
<line x1="604.5" y1="648.1" x2="1066.7" y2="562.3" stroke="#2f9384" stroke-width="1.25"/>
<text x="629.30" y="723.70" font-size="15.4" fill="#d6d8df" stroke="#d6d8df" stroke-width=".25" text-anchor="end" letter-spacing="-0.764" transform="rotate(-45 629.30 723.70)">28 Sep ..</text>
<text x="681.77" y="723.70" font-size="15.4" fill="#d6d8df" stroke="#d6d8df" stroke-width=".25" text-anchor="end" letter-spacing="0.098" word-spacing="-0.92" transform="rotate(-45 681.77 723.70)">01 Oct 2025</text>
<text x="734.24" y="723.70" font-size="15.4" fill="#d6d8df" stroke="#d6d8df" stroke-width=".25" text-anchor="end" letter-spacing="0.098" word-spacing="-0.92" transform="rotate(-45 734.24 723.70)">04 Oct 2025</text>
<text x="786.71" y="723.70" font-size="15.4" fill="#d6d8df" stroke="#d6d8df" stroke-width=".25" text-anchor="end" letter-spacing="0.098" word-spacing="-0.92" transform="rotate(-45 786.71 723.70)">07 Oct 2025</text>
<text x="839.18" y="723.70" font-size="15.4" fill="#d6d8df" stroke="#d6d8df" stroke-width=".25" text-anchor="end" letter-spacing="0.098" word-spacing="-0.92" transform="rotate(-45 839.18 723.70)">10 Oct 2025</text>
<text x="891.65" y="723.70" font-size="15.4" fill="#d6d8df" stroke="#d6d8df" stroke-width=".25" text-anchor="end" letter-spacing="0.098" word-spacing="-0.92" transform="rotate(-45 891.65 723.70)">13 Oct 2025</text>
<text x="944.12" y="723.70" font-size="15.4" fill="#d6d8df" stroke="#d6d8df" stroke-width=".25" text-anchor="end" letter-spacing="0.098" word-spacing="-0.92" transform="rotate(-45 944.12 723.70)">16 Oct 2025</text>
<text x="996.59" y="723.70" font-size="15.4" fill="#d6d8df" stroke="#d6d8df" stroke-width=".25" text-anchor="end" letter-spacing="0.098" word-spacing="-0.92" transform="rotate(-45 996.59 723.70)">19 Oct 2025</text>
<text x="1049.06" y="723.70" font-size="15.4" fill="#d6d8df" stroke="#d6d8df" stroke-width=".25" text-anchor="end" letter-spacing="0.098" word-spacing="-0.92" transform="rotate(-45 1049.06 723.70)">22 Oct 2025</text>
<text x="903.80" y="499.40" font-size="14.4" fill="#f2f3f6" font-weight="700" letter-spacing="-0.950" word-spacing="-0.86">Trend Line:</text>
<line x1="983.8" y1="494.6" x2="999.4" y2="494.6" stroke="#2fa090" stroke-width="2"/>
<text x="1003.50" y="499.70" font-size="14.4" fill="#eceef2" stroke="#eceef2" stroke-width=".25" letter-spacing="-0.887">Sessions</text>
<rect x="688.9" y="797.6" width="18.6" height="18.6" fill="#3dd5c1"/><path d="M694.4,808.3 l2.7,3.7 l4.9,-8.1" fill="none" stroke="#fff" stroke-width="1.8" stroke-linecap="round" stroke-linejoin="round"/>
<text x="711.60" y="812.70" font-size="15.3" fill="#dfe1e7" stroke="#dfe1e7" stroke-width=".25" letter-spacing="-0.854">Sessions</text>
<rect x="777.3" y="797.6" width="18.6" height="18.6" fill="#1d3d3a"/><path d="M782.8,808.3 l2.7,3.7 l4.9,-8.1" fill="none" stroke="#fff" stroke-width="1.8" stroke-linecap="round" stroke-linejoin="round"/>
<text x="800.50" y="812.70" font-size="15.3" fill="#dfe1e7" stroke="#dfe1e7" stroke-width=".25" letter-spacing="-0.485" word-spacing="-0.92">Forecasted Sessions</text>
</g>
<g>
<line x1="1139.9" y1="513.9" x2="1146.9" y2="513.9" stroke="#363944" stroke-width="1"/>
<line x1="1150.3" y1="513.9" x2="1583.0" y2="513.9" stroke="#343741" stroke-width="1" stroke-dasharray="3 2.9"/>
<text x="1133.50" y="518.60" font-size="15.5" fill="#d6d8df" stroke="#d6d8df" stroke-width=".25" text-anchor="end" letter-spacing="0.453">2M</text>
<line x1="1139.9" y1="566.4" x2="1146.9" y2="566.4" stroke="#363944" stroke-width="1"/>
<line x1="1150.3" y1="566.4" x2="1583.0" y2="566.4" stroke="#343741" stroke-width="1" stroke-dasharray="3 2.9"/>
<text x="1133.50" y="571.10" font-size="15.5" fill="#d6d8df" stroke="#d6d8df" stroke-width=".25" text-anchor="end" letter-spacing="-0.323">1.5M</text>
<line x1="1139.9" y1="619.1" x2="1146.9" y2="619.1" stroke="#363944" stroke-width="1"/>
<line x1="1150.3" y1="619.1" x2="1583.0" y2="619.1" stroke="#343741" stroke-width="1" stroke-dasharray="3 2.9"/>
<text x="1133.50" y="623.80" font-size="15.5" fill="#d6d8df" stroke="#d6d8df" stroke-width=".25" text-anchor="end" letter-spacing="-0.047">1M</text>
<line x1="1139.9" y1="671.6" x2="1146.9" y2="671.6" stroke="#363944" stroke-width="1"/>
<line x1="1150.3" y1="671.6" x2="1583.0" y2="671.6" stroke="#343741" stroke-width="1" stroke-dasharray="3 2.9"/>
<text x="1133.50" y="676.30" font-size="15.5" fill="#d6d8df" stroke="#d6d8df" stroke-width=".25" text-anchor="end" letter-spacing="0.032">500K</text>
<line x1="1144.5" y1="709.3" x2="1584.0" y2="709.3" stroke="#3d404e" stroke-width="1.4"/>
<path d="M1164.2,699.1C1169.8,669.2 1175.3,639.4 1180.9,639.4C1186.4,639.4 1192.0,678.0 1197.5,678.0C1203.1,678.0 1208.7,653.0 1214.2,643.2C1219.8,633.4 1225.3,619.4 1230.9,619.4C1236.4,619.4 1242.0,645.8 1247.5,645.8C1253.1,645.8 1258.7,637.7 1264.2,637.7C1269.8,637.7 1275.3,670.4 1280.9,670.4C1286.4,670.4 1292.0,627.6 1297.6,624.9C1303.1,622.2 1308.7,622.1 1314.2,620.9C1319.8,619.6 1325.3,618.1 1330.9,617.4C1336.5,616.7 1342.0,617.1 1347.6,616.4C1353.1,615.7 1358.7,599.7 1364.2,599.7C1369.8,599.7 1375.4,609.9 1380.9,609.9C1386.5,609.9 1392.0,588.4 1397.6,588.4C1403.1,588.4 1408.7,590.2 1414.2,590.2C1419.8,590.2 1425.4,562.9 1430.9,562.9C1436.5,562.9 1442.0,575.4 1447.6,575.4C1453.1,575.4 1458.7,556.2 1464.3,547.6C1469.8,539.1 1475.4,531.6 1480.9,524.1" fill="none" stroke="#3dd5c1" stroke-width="3.6" stroke-linejoin="round" stroke-linecap="round"/>
<circle cx="1164.2" cy="699.1" r="7.1" fill="#3dd5c1"/><circle cx="1164.2" cy="699.1" r="4.4" fill="none" stroke="#1c1e27" stroke-width="1.45"/>
<circle cx="1180.9" cy="639.4" r="7.1" fill="#3dd5c1"/><circle cx="1180.9" cy="639.4" r="4.4" fill="none" stroke="#1c1e27" stroke-width="1.45"/>
<circle cx="1197.5" cy="678.0" r="7.1" fill="#3dd5c1"/><circle cx="1197.5" cy="678.0" r="4.4" fill="none" stroke="#1c1e27" stroke-width="1.45"/>
<circle cx="1214.2" cy="643.2" r="7.1" fill="#3dd5c1"/><circle cx="1214.2" cy="643.2" r="4.4" fill="none" stroke="#1c1e27" stroke-width="1.45"/>
<circle cx="1230.9" cy="619.4" r="7.1" fill="#3dd5c1"/><circle cx="1230.9" cy="619.4" r="4.4" fill="none" stroke="#1c1e27" stroke-width="1.45"/>
<circle cx="1247.5" cy="645.8" r="7.1" fill="#3dd5c1"/><circle cx="1247.5" cy="645.8" r="4.4" fill="none" stroke="#1c1e27" stroke-width="1.45"/>
<circle cx="1264.2" cy="637.7" r="7.1" fill="#3dd5c1"/><circle cx="1264.2" cy="637.7" r="4.4" fill="none" stroke="#1c1e27" stroke-width="1.45"/>
<circle cx="1280.9" cy="670.4" r="7.1" fill="#3dd5c1"/><circle cx="1280.9" cy="670.4" r="4.4" fill="none" stroke="#1c1e27" stroke-width="1.45"/>
<circle cx="1297.6" cy="624.9" r="7.1" fill="#3dd5c1"/><circle cx="1297.6" cy="624.9" r="4.4" fill="none" stroke="#1c1e27" stroke-width="1.45"/>
<circle cx="1314.2" cy="620.9" r="7.1" fill="#3dd5c1"/><circle cx="1314.2" cy="620.9" r="4.4" fill="none" stroke="#1c1e27" stroke-width="1.45"/>
<circle cx="1330.9" cy="617.4" r="7.1" fill="#3dd5c1"/><circle cx="1330.9" cy="617.4" r="4.4" fill="none" stroke="#1c1e27" stroke-width="1.45"/>
<circle cx="1347.6" cy="616.4" r="7.1" fill="#3dd5c1"/><circle cx="1347.6" cy="616.4" r="4.4" fill="none" stroke="#1c1e27" stroke-width="1.45"/>
<circle cx="1364.2" cy="599.7" r="7.1" fill="#3dd5c1"/><circle cx="1364.2" cy="599.7" r="4.4" fill="none" stroke="#1c1e27" stroke-width="1.45"/>
<circle cx="1380.9" cy="609.9" r="7.1" fill="#3dd5c1"/><circle cx="1380.9" cy="609.9" r="4.4" fill="none" stroke="#1c1e27" stroke-width="1.45"/>
<circle cx="1397.6" cy="588.4" r="7.1" fill="#3dd5c1"/><circle cx="1397.6" cy="588.4" r="4.4" fill="none" stroke="#1c1e27" stroke-width="1.45"/>
<circle cx="1414.2" cy="590.2" r="7.1" fill="#3dd5c1"/><circle cx="1414.2" cy="590.2" r="4.4" fill="none" stroke="#1c1e27" stroke-width="1.45"/>
<circle cx="1430.9" cy="562.9" r="7.1" fill="#3dd5c1"/><circle cx="1430.9" cy="562.9" r="4.4" fill="none" stroke="#1c1e27" stroke-width="1.45"/>
<circle cx="1447.6" cy="575.4" r="7.1" fill="#3dd5c1"/><circle cx="1447.6" cy="575.4" r="4.4" fill="none" stroke="#1c1e27" stroke-width="1.45"/>
<circle cx="1464.3" cy="547.6" r="7.1" fill="#3dd5c1"/><circle cx="1464.3" cy="547.6" r="4.4" fill="none" stroke="#1c1e27" stroke-width="1.45"/>
<circle cx="1480.9" cy="524.1" r="7.1" fill="#3dd5c1"/><circle cx="1480.9" cy="524.1" r="4.4" fill="none" stroke="#1c1e27" stroke-width="1.45"/>
<circle cx="1497.6" cy="553.4" r="7.1" fill="#b966e8"/><circle cx="1497.6" cy="553.4" r="4.4" fill="none" stroke="#1c1e27" stroke-width="1.45"/>
<circle cx="1514.3" cy="575.4" r="7.1" fill="#b966e8"/><circle cx="1514.3" cy="575.4" r="4.4" fill="none" stroke="#1c1e27" stroke-width="1.45"/>
<circle cx="1530.9" cy="524.4" r="7.1" fill="#b966e8"/><circle cx="1530.9" cy="524.4" r="4.4" fill="none" stroke="#1c1e27" stroke-width="1.45"/>
<circle cx="1547.6" cy="529.9" r="7.1" fill="#b966e8"/><circle cx="1547.6" cy="529.9" r="4.4" fill="none" stroke="#1c1e27" stroke-width="1.45"/>
<circle cx="1564.3" cy="516.8" r="7.1" fill="#b966e8"/><circle cx="1564.3" cy="516.8" r="4.4" fill="none" stroke="#1c1e27" stroke-width="1.45"/>
<path d="M1480.9,524.1C1486.5,534.5 1492.0,544.8 1497.6,553.4C1503.2,561.9 1508.7,575.4 1514.3,575.4C1519.8,575.4 1525.4,524.4 1530.9,524.4C1536.5,524.4 1542.1,529.9 1547.6,529.9C1553.2,529.9 1558.7,523.3 1564.3,516.8" fill="none" stroke="#b46be0" stroke-width="1.3" stroke-dasharray="3.2 3"/>
<line x1="1144.5" y1="685.2" x2="1584.3" y2="515.7" stroke="#2f9384" stroke-width="1.25"/>
<text x="1168.10" y="723.70" font-size="15.4" fill="#d6d8df" stroke="#d6d8df" stroke-width=".25" text-anchor="end" letter-spacing="-0.764" transform="rotate(-45 1168.10 723.70)">28 Sep ..</text>
<text x="1218.11" y="723.70" font-size="15.4" fill="#d6d8df" stroke="#d6d8df" stroke-width=".25" text-anchor="end" letter-spacing="0.098" word-spacing="-0.92" transform="rotate(-45 1218.11 723.70)">01 Oct 2025</text>
<text x="1268.12" y="723.70" font-size="15.4" fill="#d6d8df" stroke="#d6d8df" stroke-width=".25" text-anchor="end" letter-spacing="0.098" word-spacing="-0.92" transform="rotate(-45 1268.12 723.70)">04 Oct 2025</text>
<text x="1318.13" y="723.70" font-size="15.4" fill="#d6d8df" stroke="#d6d8df" stroke-width=".25" text-anchor="end" letter-spacing="0.098" word-spacing="-0.92" transform="rotate(-45 1318.13 723.70)">07 Oct 2025</text>
<text x="1368.14" y="723.70" font-size="15.4" fill="#d6d8df" stroke="#d6d8df" stroke-width=".25" text-anchor="end" letter-spacing="0.098" word-spacing="-0.92" transform="rotate(-45 1368.14 723.70)">10 Oct 2025</text>
<text x="1418.15" y="723.70" font-size="15.4" fill="#d6d8df" stroke="#d6d8df" stroke-width=".25" text-anchor="end" letter-spacing="0.098" word-spacing="-0.92" transform="rotate(-45 1418.15 723.70)">13 Oct 2025</text>
<text x="1468.16" y="723.70" font-size="15.4" fill="#d6d8df" stroke="#d6d8df" stroke-width=".25" text-anchor="end" letter-spacing="0.098" word-spacing="-0.92" transform="rotate(-45 1468.16 723.70)">16 Oct 2025</text>
<text x="1518.17" y="723.70" font-size="15.4" fill="#d6d8df" stroke="#d6d8df" stroke-width=".25" text-anchor="end" letter-spacing="0.098" word-spacing="-0.92" transform="rotate(-45 1518.17 723.70)">19 Oct 2025</text>
<text x="1568.18" y="723.70" font-size="15.4" fill="#d6d8df" stroke="#d6d8df" stroke-width=".25" text-anchor="end" letter-spacing="0.098" word-spacing="-0.92" transform="rotate(-45 1568.18 723.70)">22 Oct 2025</text>
<text x="1438.40" y="499.40" font-size="14.4" fill="#f2f3f6" font-weight="700" letter-spacing="-0.940" word-spacing="-0.86">Trend Line:</text>
<line x1="1518.5" y1="494.6" x2="1533.8" y2="494.6" stroke="#2fa090" stroke-width="2"/>
<text x="1538.20" y="499.70" font-size="14.4" fill="#eceef2" stroke="#eceef2" stroke-width=".25" letter-spacing="-0.698">Users</text>
<rect x="1234.6" y="797.6" width="18.6" height="18.6" fill="#3dd5c1"/><path d="M1240.1,808.3 l2.7,3.7 l4.9,-8.1" fill="none" stroke="#fff" stroke-width="1.8" stroke-linecap="round" stroke-linejoin="round"/>
<text x="1257.80" y="812.70" font-size="15.3" fill="#dfe1e7" stroke="#dfe1e7" stroke-width=".25" letter-spacing="-0.638">Users</text>
<rect x="1305.3" y="797.6" width="18.6" height="18.6" fill="#b163e6"/><path d="M1310.8,808.3 l2.7,3.7 l4.9,-8.1" fill="none" stroke="#fff" stroke-width="1.8" stroke-linecap="round" stroke-linejoin="round"/>
<text x="1328.00" y="812.70" font-size="15.3" fill="#dfe1e7" stroke="#dfe1e7" stroke-width=".25" letter-spacing="-0.314" word-spacing="-0.92">Forecasted Users</text>
</g>
</svg>
<ul id="menu"><li class="hl"></li><li style="left:17.70px;top:15.90px;font-size:16.3px;line-height:16.3px;color:#141414;-webkit-text-stroke:.22px;letter-spacing:-0.369px;word-spacing:-0.98px;">Export as CSV</li><li style="left:17.70px;top:51.10px;font-size:16.3px;line-height:16.3px;color:#333;-webkit-text-stroke:.22px;letter-spacing:-0.021px;word-spacing:-0.98px;">Export as HTML</li><li style="left:17.70px;top:86.30px;font-size:16.3px;line-height:16.3px;color:#333;-webkit-text-stroke:.22px;letter-spacing:-0.160px;word-spacing:-0.98px;">Layout as in Dashboard - PDF</li><li style="left:17.70px;top:121.50px;font-size:16.3px;line-height:16.3px;color:#333;-webkit-text-stroke:.22px;letter-spacing:-0.243px;word-spacing:-0.98px;">Each Report in a New Page - PDF</li><li style="left:17.70px;top:156.70px;font-size:16.3px;line-height:16.3px;color:#333;-webkit-text-stroke:.22px;letter-spacing:-0.293px;word-spacing:-0.98px;">Export as PPT</li><li style="left:17.70px;top:191.90px;font-size:16.3px;line-height:16.3px;color:#333;-webkit-text-stroke:.22px;letter-spacing:-0.065px;word-spacing:-0.98px;">Export as Template</li><li style="left:17.70px;top:227.10px;font-size:16.3px;line-height:16.3px;color:#333;-webkit-text-stroke:.22px;letter-spacing:0.018px;word-spacing:-0.98px;">To other Workspaces</li></ul>
</div></div>
</body></html>
